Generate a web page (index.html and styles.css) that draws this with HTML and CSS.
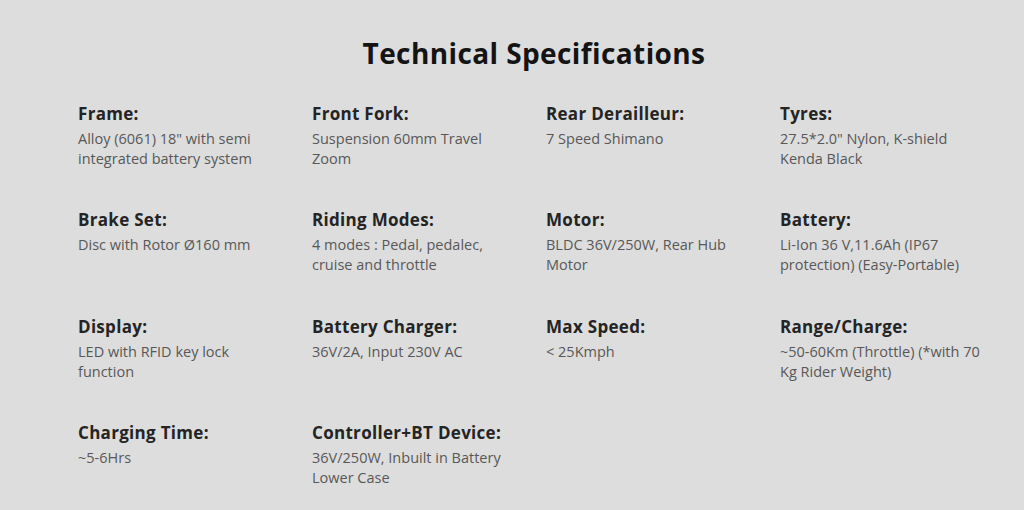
FILE: index.html
```html
<!DOCTYPE html>
<html>
<head>
<meta charset="utf-8">
<link rel="stylesheet" href="styles.css">
</head>
<body>
<section class="specs">
  <h2 class="title">Technical Specifications</h2>
  <div class="grid">
    <div class="item"><h3>Frame:</h3><p>Alloy (6061) 18" with semi integrated battery system</p></div>
    <div class="item"><h3>Front Fork:</h3><p>Suspension 60mm Travel Zoom</p></div>
    <div class="item"><h3>Rear Derailleur:</h3><p>7 Speed Shimano</p></div>
    <div class="item"><h3>Tyres:</h3><p>27.5*2.0" Nylon, K-shield Kenda Black</p></div>
    <div class="item"><h3>Brake Set:</h3><p>Disc with Rotor Ø160 mm</p></div>
    <div class="item"><h3>Riding Modes:</h3><p>4 modes : Pedal, pedalec, cruise and throttle</p></div>
    <div class="item"><h3>Motor:</h3><p>BLDC 36V/250W, Rear Hub Motor</p></div>
    <div class="item"><h3>Battery:</h3><p>Li-Ion 36 V,11.6Ah (IP67 protection) (Easy-Portable)</p></div>
    <div class="item"><h3>Display:</h3><p>LED with RFID key lock function</p></div>
    <div class="item"><h3>Battery Charger:</h3><p>36V/2A, Input 230V AC</p></div>
    <div class="item"><h3>Max Speed:</h3><p>&lt; 25Kmph</p></div>
    <div class="item"><h3>Range/Charge:</h3><p>~50-60Km (Throttle) (*with 70 Kg Rider Weight)</p></div>
    <div class="item"><h3>Charging Time:</h3><p>~5-6Hrs</p></div>
    <div class="item"><h3>Controller+BT Device:</h3><p>36V/250W, Inbuilt in Battery Lower Case</p></div>
  </div>
</section>
</body>
</html>
```
FILE: styles.css
```css
html, body {
  margin: 0;
  padding: 0;
  background: #dddddd;
}
body {
  font-family: "Open Sans", "Liberation Sans", sans-serif;
  width: 1024px;
  height: 510px;
  overflow: hidden;
}
.specs {
  padding: 36px 34px 0 78px;
}
.title {
  margin: 0 0 33px 0;
  text-align: center;
  font-size: 28px;
  font-weight: 700;
  letter-spacing: 0.4px;
  color: #141414;
  line-height: 34px;
}
.grid {
  display: grid;
  grid-template-columns: repeat(4, 234px);
  grid-auto-rows: 106.4px;
}
.item h3 {
  margin: 0;
  font-size: 17px;
  font-weight: 700;
  letter-spacing: 0.3px;
  color: #242424;
  line-height: 22px;
}
.item p {
  margin: 4px 0 0 0;
  width: 200px;
  font-size: 14.5px;
  line-height: 20px;
  color: #585858;
}
```
